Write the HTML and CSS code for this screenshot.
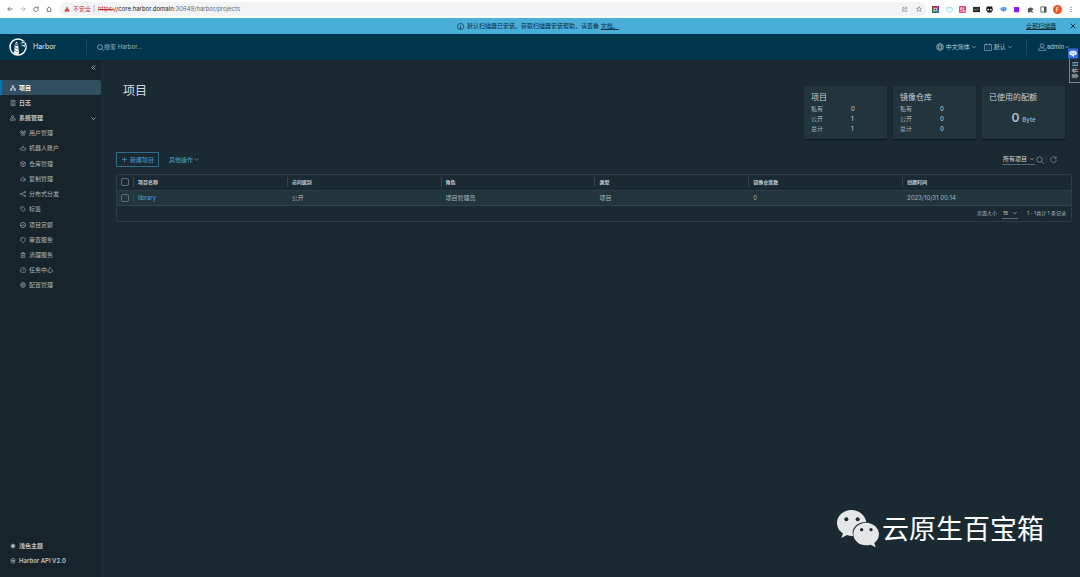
FILE: index.html
```html
<!DOCTYPE html>
<html lang="zh-CN">
<head>
<meta charset="utf-8">
<title>Harbor</title>
<link rel="stylesheet" href="styles.css">
</head>
<body>
<svg class="defs" aria-hidden="true">
  <symbol id="down" viewBox="0 0 10 10"><path d="M1 3l4 4 4-4"/></symbol>
  <symbol id="search" viewBox="0 0 16 16"><circle cx="7" cy="7" r="5.5"/><path d="M11 11l4.500 4.500"/></symbol>
</svg>
<div class="page">
<div class="browser">
  <svg class="ic nav" viewBox="0 0 16 16"><path d="M15 8H2M8 2L2 8l6 6"/></svg>
  <svg class="ic nav pale" viewBox="0 0 16 16"><path d="M1 8h13M8 2l6 6-6 6"/></svg>
  <svg class="ic nav" viewBox="0 0 16 16"><path d="M13 5.500A6 6 0 1 0 14 9M14 2v4h-4"/></svg>
  <svg class="ic nav" viewBox="0 0 16 16"><path d="M1.500 8.500L8 2.500l6.500 6M3.500 8v6.500h9V8"/></svg>
  <div class="omnibox">
    <svg class="warn" viewBox="0 0 12 12"><path d="M6 1l5.500 10H.5z" fill="#c5382c"/><path d="M6 4.500v3M6 8.500v1.200" stroke="#fff"/></svg>
    <span class="unsafe">不安全</span><span class="bar">|</span>
    <span class="url"><s>https:</s><b>//core.harbor.domain</b>:30649/harbor/projects</span>
    <svg class="ic end" viewBox="0 0 16 16"><path d="M6 4H2v10h11v-4M5 11c0-4 3-6 7-6M10 2l4 3-4 3.500"/></svg>
    <svg class="ic" viewBox="0 0 16 16"><path d="M8 1.500l2 4.500 4.800.4-3.600 3.200 1.100 4.800L8 11.900l-4.300 2.500 1.100-4.800L1.200 6.400 6 6z"/></svg>
  </div>
  <div class="exts">
    <svg viewBox="0 0 16 16"><rect width="16" height="16" rx="2" fill="#2d3142"/><path d="M1 1h7v7H1z" fill="#e94335"/><path d="M8 1h7v7H8z" fill="#ad3fc7"/><path d="M1 8h7v7H1z" fill="#35a853"/><path d="M8 8h7v7H8z" fill="#4285f4"/><circle cx="8" cy="8" r="4" fill="#fff"/><circle cx="8" cy="8" r="2.500" fill="#26324a"/></svg>
    <svg viewBox="0 0 16 16" fill="none" stroke="#7ed0f5" stroke-width="2"><path d="M3 3c2 1 8 1 10 0 3 6 0 11-5 11S0 9 3 3zM6 6v1M10 6v1"/></svg>
    <svg viewBox="0 0 16 16"><rect width="16" height="16" rx="2" fill="#e4407f"/><path d="M3 4h4v4H3zM10 3v5M3 12h4M9 10h4v3H9z" fill="none" stroke="#fff" stroke-width="1.500"/></svg>
    <svg viewBox="0 0 16 16"><rect y="2" width="16" height="12" fill="#252b31"/><path d="M2 9l3-1 3 1 3-2 3 1" fill="none" stroke="#a3b94e" stroke-width="1.500"/></svg>
    <svg viewBox="0 0 16 16"><path d="M2 1h12l2 9-3 1v4H3v-4l-3-1z" fill="#151515"/><circle cx="5" cy="8" r="2" fill="#fff"/><circle cx="11" cy="8" r="2" fill="#fff"/></svg>
    <svg viewBox="0 0 16 16"><path d="M1 7c0-4 4-5 7-4 4-2 8 1 7 5s-4 4-5 3l-1 4-3-4C3 12 1 10 1 7z" fill="#4b94e6"/><path d="M4 7h3M9 6l3 2" stroke="#fff"/></svg>
    <svg viewBox="0 0 16 16"><rect x="2" y="2" width="12" height="12" rx="1" fill="#8d20f4"/><path d="M9 6h2v4" stroke="#4a118c" fill="none"/></svg>
    <svg viewBox="0 0 16 16"><path d="M2 5h4a2 2 0 1 1 4 0h4v4a2 2 0 1 0 0 3v3h-4a2 2 0 0 0-4 0H2v-4a2 2 0 0 0 0-3z" fill="#4a4d51"/></svg>
    <svg viewBox="0 0 16 16"><path d="M2 2h12v12H2z" fill="none" stroke="#55585c" stroke-width="2"/><path d="M9 2h5v12H9z" fill="#55585c"/></svg>
  </div>
  <span class="avatar">F</span>
  <svg class="more" viewBox="0 0 4 16"><circle cx="2" cy="3" r="1.400"/><circle cx="2" cy="8" r="1.400"/><circle cx="2" cy="13" r="1.400"/></svg>
</div>

<div class="alert">
  <span class="alert-text"><svg class="ic" viewBox="0 0 16 16"><circle cx="8" cy="8" r="7"/><path d="M8 7v5M8 4v1.500M6.500 12h3"/></svg>
  <span>默认扫描器已安装。获取扫描器安装帮助，请查看 <a href="#">文档。</a></span></span>
  <a class="all" href="#">全部扫描器</a>
  <button class="close" aria-label="关闭"><svg class="ic" viewBox="0 0 10 10"><path d="M1 1l8 8M9 1L1 9"/></svg></button>
</div>

<header class="header">
  <a class="brand" href="#">
    <svg viewBox="0 0 36 36"><circle cx="18" cy="18" r="16" fill="none" stroke="#fff" stroke-width="3"/><path d="M12 13h6l2 18-5 2-5-3zM12 11l3-4 3 4zM11 16h8v-1.500h-8z" fill="#fff"/><path d="M21 11l8-5 3 4zM21 13l12 1v5zM12 19l6 3M11 25l7 3" fill="#fff" stroke="#00364d" stroke-width="1"/></svg>
    <span>Harbor</span>
  </a>
  <label class="find"><svg class="ic" aria-hidden="true"><use href="#search"/></svg><input type="text" placeholder="搜索 Harbor..." aria-label="搜索"></label>
  <button class="hbtn lang"><svg class="ic" viewBox="0 0 16 16"><circle cx="8" cy="8" r="7"/><ellipse cx="8" cy="8" rx="3" ry="7"/><path d="M1 8h14M2 4.500h12M2 11.500h12"/></svg>中文简体<svg class="ic caret"><use href="#down"/></svg></button>
  <button class="hbtn date"><svg class="ic" viewBox="0 0 16 16"><path d="M1 3h14v12H1zM4.500 1v4M11.500 1v4M4 8h1M7.500 8h1M11 8h1M4 11.500h1M7.500 11.500h1M11 11.500h1"/></svg>默认<svg class="ic caret"><use href="#down"/></svg></button>
  <button class="hbtn user"><svg class="ic" viewBox="0 0 16 16"><circle cx="8" cy="5" r="3.700"/><path d="M1 15v-3c2-3 12-3 14 0v3z"/></svg>admin<svg class="ic caret"><use href="#down"/></svg></button>
</header>

<div class="body">
<nav class="side">
  <button class="fold" aria-label="收起"><svg class="ic" viewBox="0 0 10 10"><path d="M5 1L1 5l4 4M9 1L5 5l4 4"/></svg></button>
  <div class="menu">
    <a class="top on" href="#"><svg class="ic" viewBox="0 0 16 16"><path d="M6 1.500h4v4H6zM1 10.500h4v4H1zM11 10.500h4v4h-4zM8 5.500V8M3 10.500V8h10v2.500"/></svg>项目</a>
    <a class="top" href="#"><svg class="ic" viewBox="0 0 16 16"><path d="M3 1h10v14H3zM5.500 4.500h5M5.500 8h5M5.500 11.500h5"/></svg>日志</a>
    <a class="top" href="#"><svg class="ic" viewBox="0 0 16 16"><circle cx="7" cy="4.500" r="3"/><path d="M8 14H1v-3c1-2 4-3 7-2"/><circle cx="12" cy="12" r="2.500"/></svg>系统管理<svg class="ic open"><use href="#down"/></svg></a>
    <a class="sub" href="#"><svg class="ic" viewBox="0 0 16 16"><circle cx="8" cy="7" r="2.500"/><circle cx="3.500" cy="4" r="2"/><circle cx="12.500" cy="4" r="2"/><path d="M4 14v-2c2-3 6-3 8 0v2zM1 10V8l3-1M15 10V8l-3-1"/></svg>用户管理</a>
    <a class="sub" href="#"><svg class="ic" viewBox="0 0 16 16"><path d="M8 1v4M3 14c-3-4-1-8 5-8s8 4 5 8zM5 10h1M10 10h1M0 9v3M16 9v3"/></svg>机器人账户</a>
    <a class="sub" href="#"><svg class="ic" viewBox="0 0 16 16"><path d="M8 1l6 3v8l-6 3-6-3V4zM2 4l6 3.500L14 4M8 7.500V15"/></svg>仓库管理</a>
    <a class="sub" href="#"><svg class="ic" viewBox="0 0 16 16"><path d="M6 13H3c-3-2-2-5 1-5 0-6 8-6 8-1 4 0 4 4 2 5M7 10h5M10 8l2.500 2-2.500 2M12 14H8"/></svg>复制管理</a>
    <a class="sub" href="#"><svg class="ic" viewBox="0 0 16 16"><circle cx="3" cy="8" r="2"/><circle cx="13" cy="3" r="2"/><circle cx="13" cy="13" r="2"/><path d="M5 7l6-3M5 9l6 3"/></svg>分布式分发</a>
    <a class="sub" href="#"><svg class="ic" viewBox="0 0 16 16"><path d="M2 2h6l6.500 7-5.500 5.500L2 8zM5 5v1"/></svg>标签</a>
    <a class="sub" href="#"><svg class="ic" viewBox="0 0 16 16"><circle cx="8" cy="8" r="7"/><path d="M1 9h6l4-5M9 10h6"/></svg>项目定额</a>
    <a class="sub" href="#"><svg class="ic" viewBox="0 0 16 16"><path d="M8 1c2 1.500 4 2 6 2v5c0 3-3 5.500-6 7-3-1.500-6-4-6-7V3c2 0 4-.5 6-2z"/></svg>审查服务</a>
    <a class="sub" href="#"><svg class="ic" viewBox="0 0 16 16"><path d="M2 4h12M5.500 4V1.500h5V4M3.500 4v11h9V4M6.500 7v5M9.500 7v5"/></svg>清理服务</a>
    <a class="sub" href="#"><svg class="ic" viewBox="0 0 16 16"><path d="M3 14C-2 8 2 2 8 2s10 6 5 12zM7.500 10.500L11 6M4 9h1M8 4v1"/></svg>任务中心</a>
    <a class="sub" href="#"><svg class="ic" viewBox="0 0 16 16"><circle cx="8" cy="8" r="6"/><circle cx="8" cy="8" r="2.300"/><path d="M8 0v3M8 13v3M0 8h3M13 8h3M2.500 2.500l1.500 1.500M12 12l1.500 1.500M13.500 2.500L12 4M2.500 13.500L4 12"/></svg>配置管理</a>
  </div>
  <div class="foot">
    <button class="top"><svg class="ic" viewBox="0 0 16 16"><circle cx="8" cy="8" r="3.500" fill="#b9c3c9"/><path d="M8 1v14M1 8h14M3 3l10 10M13 3L3 13"/></svg>浅色主题</button>
    <a class="top" href="#"><svg class="ic" viewBox="0 0 16 16"><path d="M3 3c2-3 8-3 10 0M3 3v8l5 4 5-4V3M3 7h10M5 4l6 5M6 11l2-2 3 2"/></svg>Harbor API V2.0</a>
  </div>
</nav>

<main class="main">
  <div class="head">
    <h1>项目</h1>
    <section class="card"><h2>项目</h2><dl><dt>私有</dt><dd>0</dd><dt>公开</dt><dd>1</dd><dt>总计</dt><dd>1</dd></dl></section>
    <section class="card"><h2>镜像仓库</h2><dl><dt>私有</dt><dd>0</dd><dt>公开</dt><dd>0</dd><dt>总计</dt><dd>0</dd></dl></section>
    <section class="card"><h2>已使用的配额</h2><p class="quota"><span>0</span> Byte</p></section>
  </div>
  <div class="tools">
    <button class="new"><svg class="ic" viewBox="0 0 10 10"><path d="M5 0v10M0 5h10"/></svg>新建项目</button>
    <button class="other">其他操作<svg class="ic"><use href="#down"/></svg></button>
    <span class="pick scope"><select aria-label="项目范围"><option>所有项目</option></select><svg class="ic"><use href="#down"/></svg></span>
    <button class="icon" aria-label="搜索项目"><svg class="ic"><use href="#search"/></svg></button>
    <button class="icon refresh" aria-label="刷新"><svg class="ic" viewBox="0 0 16 16"><path d="M13 4A6.500 6.500 0 1 0 14.500 9M14 1v5H9"/></svg></button>
  </div>
  <div class="grid">
    <table>
      <thead><tr><th class="tick"><input type="checkbox" aria-label="全选"></th><th>项目名称</th><th>访问级别</th><th>角色</th><th>类型</th><th>镜像仓库数</th><th class="last">创建时间</th></tr></thead>
      <tbody><tr><td class="tick"><input type="checkbox" aria-label="选择 library"></td><td><a href="#">library</a></td><td>公开</td><td>项目管理员</td><td>项目</td><td>0</td><td>2023/10/31 00:14</td></tr></tbody>
    </table>
    <div class="pager">
      <label for="size">页面大小</label>
      <span class="pick"><select id="size"><option>15</option></select><svg class="ic"><use href="#down"/></svg></span>
      <span>1 - 1共计 1 条记录</span>
    </div>
  </div>
</main>
</div>

<aside class="events"><svg viewBox="0 0 16 16"><rect width="16" height="16" rx="2" fill="#386de2"/><path d="M2 8c0-4 4-5 6-4 4-1 6 1 6 4s-3 3-4 2l-1 4-3-3c-2 0-4-1-4-3z" fill="#e5eeff"/><path d="M5 7l3 1M10 6v2" stroke="#386de2"/></svg><button><span>事件日</span></button></aside>

<div class="mark">
  <svg viewBox="0 0 126 108"><path d="M44 0C19 0 0 17 0 39c0 13 7 24 18 31l-5 14 17-9c5 2 12 3 18 3-7-25 15-43 40-42C84 15 66 0 44 0z" fill="#e4e6e7"/><path d="M87 38c-21 0-38 15-38 34s17 34 38 34c5 0 10-1 14-2l15 8-4-13c9-7 14-16 14-27 0-19-18-34-39-34z" fill="#e4e6e7"/><g fill="#1c2a33"><circle cx="28" cy="28" r="6"/><circle cx="62" cy="28" r="6"/><circle cx="74" cy="59" r="5"/><circle cx="102" cy="59" r="5"/></g></svg>
  <span>云原生百宝箱</span>
</div>
</div>
</body>
</html>
```

FILE: styles.css
```css
* { box-sizing: border-box; }
body {
  margin: 0;
  font: 6px/10px Inter, "Noto Sans CJK SC", sans-serif;
  color: #a9b6be;
  background: #1b2a32;
}
button, input, select { font: inherit; color: inherit; background: none; border: 0; padding: 0; margin: 0; }
button, a { display: flex; align-items: center; white-space: nowrap; }
a { color: inherit; text-decoration: none; }
h1, h2, p, dl, dd { margin: 0; font-weight: 400; }
svg { flex: none; overflow: visible; }
.defs { position: absolute; width: 0; height: 0; }
.ic { width: 6px; height: 6px; fill: none; stroke: currentColor; stroke-width: 1.5; }
.page { min-height: 100vh; display: flex; flex-direction: column; position: relative; overflow: hidden; }

.browser { display: flex; align-items: center; height: 18px; padding: 0 8px 0 7px; background: #fff; color: #4f5357; }
.nav { width: 6px; height: 6px; margin-right: 7px; stroke-width: 2; }
.pale { color: #a4a7aa; }
.omnibox { flex: 1; display: flex; align-items: center; height: 14px; padding: 0 5px; border-radius: 7px; background: #f1f3f4; color: #686c70; }
.warn { width: 6px; height: 6px; margin-right: 3px; }
.unsafe { color: #c5382c; }
.bar { margin: 0 3px 0 2px; }
.url s { color: #c5382c; }
.url b { font-weight: 400; color: #202124; }
.end { margin: 0 8px 0 auto; }
.exts { display: flex; justify-content: space-between; width: 115px; margin: 0 6px 0 5px; }
.exts svg { width: 7px; height: 7px; }
.avatar { width: 9px; height: 9px; border-radius: 50%; background: #f4511e; color: #fff; text-align: center; line-height: 9px; }
.more { width: 2px; height: 7px; margin-left: 8px; fill: #55585c; }

.alert { display: flex; align-items: center; height: 16px; padding: 0 4px; background: #49afd9; color: #0a2b3a; }
.alert-text { display: flex; align-items: center; gap: 3px; margin-left: 453px; }
.alert-text .ic { width: 7px; height: 7px; }
.alert-text a { display: inline; text-decoration: underline; }
.all { margin-left: auto; text-decoration: underline; }
.close { margin-left: 14px; }

.header { display: flex; align-items: center; height: 26px; background: #00364d; color: #bccad1; }
.brand { width: 86px; padding-left: 9px; gap: 6px; font-size: 7px; color: #e3ebee; }
.brand svg { width: 18px; height: 18px; }
.find { flex: 1; display: flex; align-items: center; height: 16px; padding-left: 10px; border-left: 1px solid #1b4c61; }
.find .ic { width: 7px; height: 7px; }
.find input { flex: 1; outline: 0; }
.find input::placeholder { color: #9fb3bd; opacity: 1; }
.hbtn { gap: 2px; }
.hbtn .ic { width: 8px; height: 8px; stroke-width: 1; }
.hbtn .caret { width: 4px; height: 4px; stroke-width: 1.5; }
.date { margin-left: 8px; }
.user { height: 16px; margin-left: 14px; padding: 0 11px; gap: 1px; border-left: 1px solid #1b4c61; }

.body { flex: 1; display: flex; }
.side { width: 101px; display: flex; flex-direction: column; background: #18242b; }
.fold { height: 15px; margin-left: 91px; }
.fold .ic { width: 5px; height: 5px; }
.menu { display: grid; grid-template-rows: repeat(14, 1fr); height: 213px; margin-top: 5px; }
.top { padding: 0 5px 0 10px; gap: 3px; font-weight: 600; color: #bac5cb; }
.on { background: #324f62; border-radius: 0 2px 2px 0; border-left: 2px solid #0079b8; padding-left: 8px; color: #fff; }
.open { width: 5px; height: 5px; margin-left: auto; }
.sub { padding-left: 20px; gap: 3px; }
.foot { margin-top: auto; padding-bottom: 9px; }
.foot .top { height: 15px; }

.main { flex: 1; min-width: 0; padding: 26px 8px 0 15px; }
.head { display: flex; gap: 6px; padding-right: 7px; }
h1 { margin: -4px auto 0 7px; font-size: 12px; line-height: 17px; color: #d5dce0; }
.card { width: 83px; height: 53px; padding: 5px 7px 2px; background: #22343c; border-radius: 1px; box-shadow: 0 1px 1px #0d171c; }
h2 { font-size: 8px; line-height: 12px; color: #c5ced3; }
dl { display: grid; grid-template-columns: 40px 1fr; padding-top: 1px; }
dd { color: #d0d8dc; }
.quota { display: flex; align-items: baseline; justify-content: center; gap: 3px; padding-top: 8px; line-height: 14px; font-weight: 600; color: #9dadb8; }
.quota span { font-size: 12px; color: #b3c0c8; }

.tools { display: flex; align-items: center; height: 15px; margin-top: 13px; padding-right: 15px; color: #49afd9; }
.new { height: 15px; padding: 0 4px 0 5px; gap: 3px; border: 1px solid #2f6e8a; border-radius: 1px; color: #3d93b6; font-weight: 500; }
.new .ic { width: 5px; height: 5px; }
.other { margin-left: 10px; gap: 1px; color: #3d93b6; font-weight: 500; }
.other .ic { width: 5px; height: 5px; }
.pick { display: flex; align-items: center; gap: 2px; padding: 0 1px; border-bottom: 1px solid #566973; color: #d3dade; }
.pick select { appearance: none; outline: 0; }
.pick .ic { width: 4px; height: 4px; }
.scope { margin-left: auto; }
.icon { margin-left: 1px; color: #a3b1b9; }
.icon .ic { width: 8px; height: 8px; stroke-width: 1.2; }
.refresh { margin-left: 2px; padding-left: 3px; border-left: 1px solid #293c46; }
.refresh .ic { width: 7px; height: 7px; }

.grid { margin-top: 7px; border: 1px solid #2a3d47; border-radius: 2px; }
table { width: 100%; table-layout: fixed; border-collapse: collapse; }
th, td { height: 15px; padding: 0 0 0 5px; text-align: left; }
th { font-size: 5px; font-weight: 700; color: #c3ccd1; }
th + th { background: linear-gradient(#33464f, #33464f) 0 50% / 1px 10px no-repeat; }
.last { width: 169px; }
tbody tr { background: #22343c; border-top: 1px solid #2a3d47; border-bottom: 1px solid #2c424c; }
.tick + td { background: linear-gradient(#33464f, #33464f) 0 50% / 1px 10px no-repeat; }
td a { display: inline; color: #49afd9; }
.tick { width: 16px; padding-left: 4px; }
.tick input { display: block; appearance: none; width: 8px; height: 8px; border: 1px solid #5a6d77; border-radius: 2px; }
.pager { display: flex; align-items: center; justify-content: flex-end; height: 15px; padding-right: 5px; font-size: 5px; }
.pager .pick { margin: 0 9px 0 5px; padding: 0 1px; gap: 4px; }

.events { position: absolute; right: 0; top: 48px; width: 12px; }
.events svg { display: block; width: 10px; height: 11px; }
.events button { display: flex; justify-content: center; width: 11px; height: 24px; margin-left: 1px; border: 1px solid #7c868b; border-top: 0; border-right: 0; background: #1b2a32; color: #c4ccd0; }
.events span { writing-mode: vertical-rl; text-orientation: sideways; transform: rotate(180deg); line-height: 8px; }
.mark { position: absolute; right: 36px; bottom: 29px; display: flex; align-items: center; gap: 3px; color: #fff; font: 27px/40px "Noto Sans CJK SC", sans-serif; }
.mark svg { width: 42px; height: 36px; }
```
